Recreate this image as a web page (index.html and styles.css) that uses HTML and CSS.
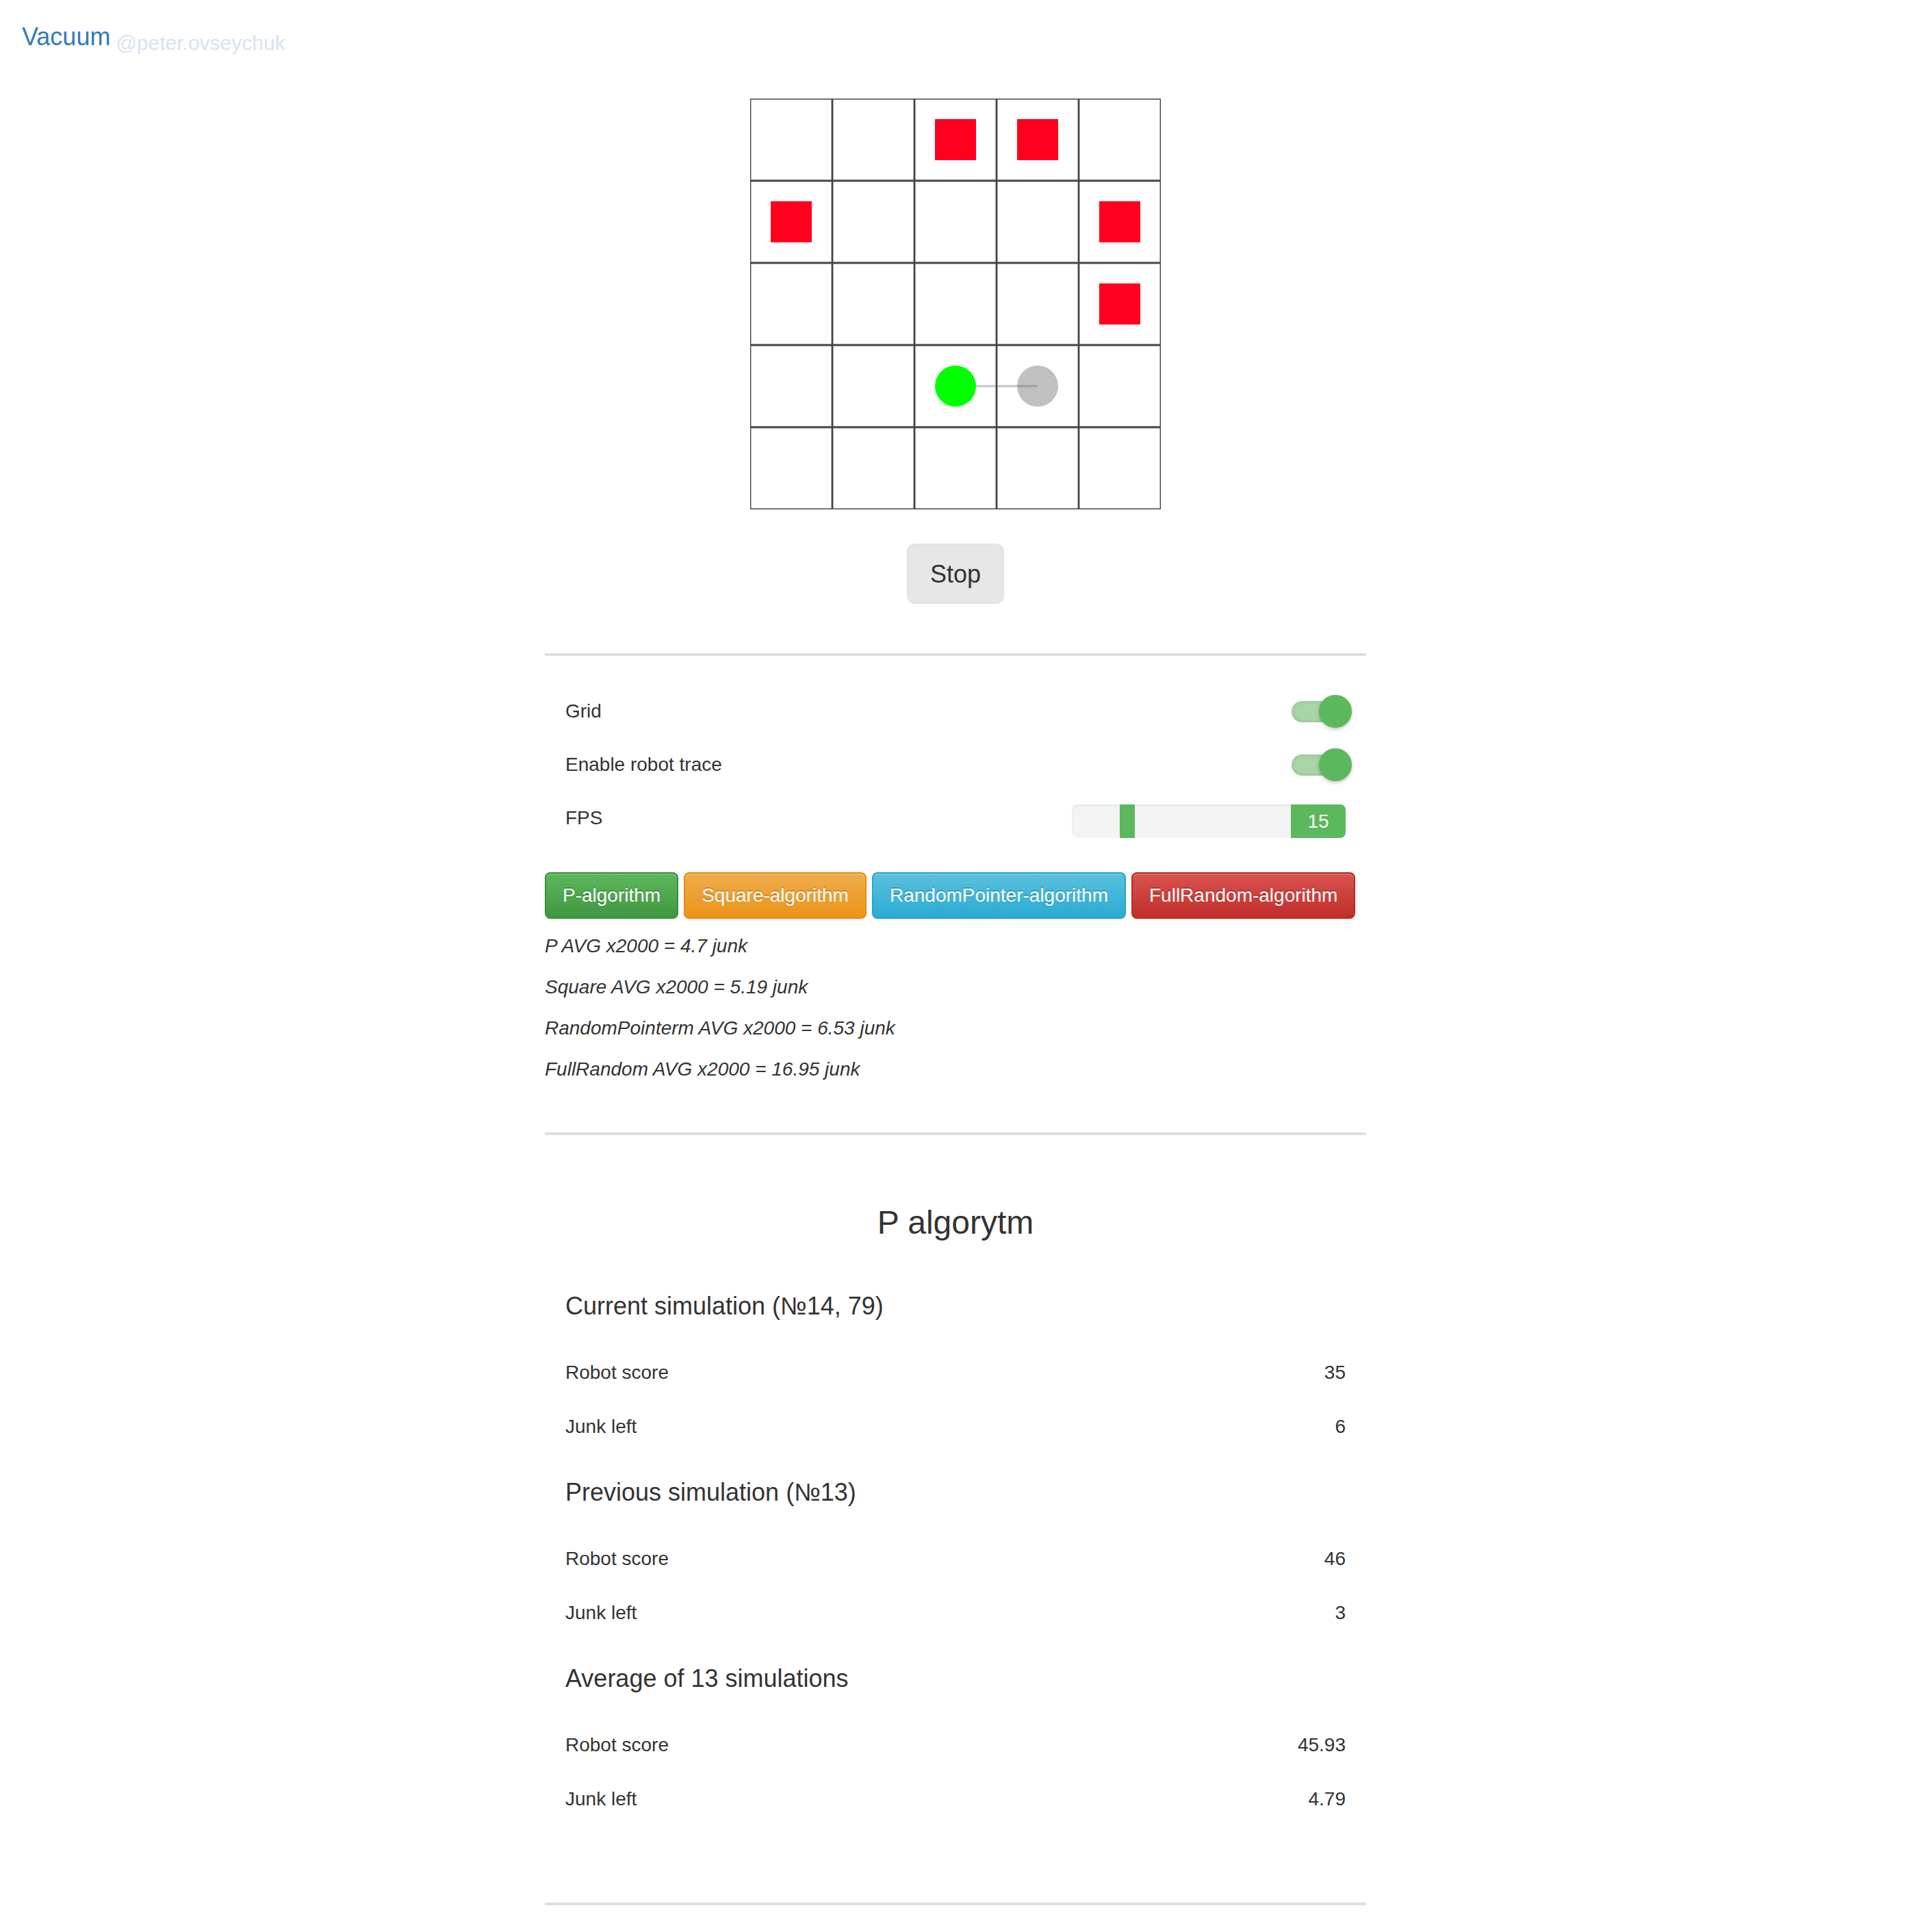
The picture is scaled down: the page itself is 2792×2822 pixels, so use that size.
FILE: index.html
```html
<!DOCTYPE html>
<html lang="en">
<head>
<meta charset="utf-8">
<title>Vacuum</title>
<link rel="stylesheet" href="styles.css">
</head>
<body>
<header class="navbar">
  <a class="brand" href="#">Vacuum</a><a class="author" href="#">@peter.ovseychuk</a>
</header>

<main class="main">
  <section class="board">
    <svg class="field" width="600" height="600" viewBox="0 0 600 600">
      <g fill="#ff001f">
        <rect x="270" y="30" width="60" height="60"/>
        <rect x="390" y="30" width="60" height="60"/>
        <rect x="30" y="150" width="60" height="60"/>
        <rect x="510" y="150" width="60" height="60"/>
        <rect x="510" y="270" width="60" height="60"/>
      </g>
      <circle cx="420" cy="420" r="30" fill="#c0c0c0"/>
      <line x1="300" y1="420" x2="420" y2="420" stroke="rgba(90,90,90,0.35)" stroke-width="3"/>
      <circle cx="300" cy="420" r="30" fill="#00ff00"/>
      <g stroke="#444444" stroke-width="2.8">
        <line x1="0" y1="0" x2="0" y2="600"/>
        <line x1="120" y1="0" x2="120" y2="600"/>
        <line x1="240" y1="0" x2="240" y2="600"/>
        <line x1="360" y1="0" x2="360" y2="600"/>
        <line x1="480" y1="0" x2="480" y2="600"/>
        <line x1="600" y1="0" x2="600" y2="600"/>
        <line x1="0" y1="0" x2="600" y2="0"/>
        <line x1="0" y1="120" x2="600" y2="120"/>
        <line x1="0" y1="240" x2="600" y2="240"/>
        <line x1="0" y1="360" x2="600" y2="360"/>
        <line x1="0" y1="480" x2="600" y2="480"/>
        <line x1="0" y1="600" x2="600" y2="600"/>
      </g>
    </svg>
    <button class="btn-stop" type="button">Stop</button>
  </section>

  <hr class="divider divider-first">

  <section class="settings">
    <div class="setting-row">
      <span class="setting-label">Grid</span>
      <span class="toggle"><span class="toggle-track"></span><span class="toggle-knob"></span></span>
    </div>
    <div class="setting-row">
      <span class="setting-label">Enable robot trace</span>
      <span class="toggle"><span class="toggle-track"></span><span class="toggle-knob"></span></span>
    </div>
    <div class="setting-row">
      <span class="setting-label">FPS</span>
      <span class="slider">
        <span class="slider-track"><span class="slider-handle"></span></span>
        <span class="slider-value">15</span>
      </span>
    </div>
  </section>

  <div class="algo-buttons">
    <button class="btn btn-success" type="button">P-algorithm</button>
    <button class="btn btn-warning" type="button">Square-algorithm</button>
    <button class="btn btn-info" type="button">RandomPointer-algorithm</button>
    <button class="btn btn-danger" type="button">FullRandom-algorithm</button>
  </div>

  <div class="averages">
    <p>P AVG x2000 = 4.7 junk</p>
    <p>Square AVG x2000 = 5.19 junk</p>
    <p>RandomPointerm AVG x2000 = 6.53 junk</p>
    <p>FullRandom AVG x2000 = 16.95 junk</p>
  </div>

  <hr class="divider divider-second">

  <section class="stats">
    <h3 class="stats-title">P algorytm</h3>

    <h4 class="stats-heading">Current simulation (№14, 79)</h4>
    <div class="stat-row"><span>Robot score</span><span>35</span></div>
    <div class="stat-row"><span>Junk left</span><span>6</span></div>

    <h4 class="stats-heading">Previous simulation (№13)</h4>
    <div class="stat-row"><span>Robot score</span><span>46</span></div>
    <div class="stat-row"><span>Junk left</span><span>3</span></div>

    <h4 class="stats-heading">Average of 13 simulations</h4>
    <div class="stat-row"><span>Robot score</span><span>45.93</span></div>
    <div class="stat-row"><span>Junk left</span><span>4.79</span></div>
  </section>

  <hr class="divider divider-last">
</main>
</body>
</html>
```

FILE: styles.css
```css
html, body {
  margin: 0;
  padding: 0;
  background: #ffffff;
}

body {
  font-family: "Liberation Sans", Arial, Helvetica, sans-serif;
  font-size: 28px;
  line-height: 40px;
  color: #333333;
}

.navbar {
  box-sizing: border-box;
  height: 100px;
  padding: 34px 0 0 32px;
  line-height: 40px;
}

.brand {
  font-size: 36px;
  color: #337ab7;
  text-decoration: none;
}

.author {
  font-size: 30px;
  margin-left: 8px;
  color: #d6e4f1;
  text-decoration: none;
  vertical-align: -7px;
}

.main {
  width: 1200px;
  margin: 0 auto;
}

.board {
  display: flex;
  flex-direction: column;
  align-items: center;
  padding-top: 44px;
}

.field {
  display: block;
  width: 600px;
  height: 600px;
}

.btn-stop {
  margin-top: 50px;
  font-family: inherit;
  font-size: 36px;
  line-height: 44px;
  padding: 21px 32px 19px;
  color: #333333;
  background: #e6e6e6;
  border: 2px solid #e2e2e2;
  border-radius: 12px;
  cursor: pointer;
}

.divider {
  border: 0;
  height: 4px;
  background: #dedede;
  margin: 0;
}

.divider-first {
  margin-top: 72px;
}

.divider-second {
  margin-top: 72px;
}

.divider-last {
  margin-top: 112px;
  margin-bottom: 40px;
}

.settings {
  margin-top: 42px;
}

.setting-row {
  display: flex;
  align-items: center;
  justify-content: space-between;
  height: 78px;
  padding: 0 30px;
}

.toggle {
  display: flex;
  align-items: center;
  margin-right: -9px;
}

.toggle-track {
  width: 70px;
  height: 31px;
  border-radius: 16px;
  background: #a8d4a8;
  box-shadow: inset 0 0 6px rgba(0, 0, 0, 0.12);
}

.toggle-knob {
  width: 48px;
  height: 48px;
  margin-left: -30px;
  border-radius: 50%;
  background: #5cb85c;
  box-shadow: 0 2px 5px rgba(0, 0, 0, 0.25);
}

.slider {
  display: flex;
  width: 400px;
  height: 49px;
  margin-top: 9px;
  border-radius: 8px;
  overflow: hidden;
  background: #f3f3f3;
  box-shadow: inset 0 2px 3px rgba(0, 0, 0, 0.06);
}

.slider-track {
  flex: 1;
  display: flex;
}

.slider-handle {
  width: 22px;
  margin-left: 70px;
  background: #5cb85c;
}

.slider-value {
  width: 80px;
  line-height: 49px;
  text-align: center;
  color: #ffffff;
  background: #5cb85c;
}

.algo-buttons {
  display: flex;
  gap: 8px;
  margin-top: 40px;
}

.btn {
  font-family: inherit;
  font-size: 28px;
  line-height: 40px;
  padding: 12px 24px;
  border-radius: 8px;
  border: 2px solid transparent;
  color: #ffffff;
  text-shadow: 0 -2px 0 rgba(0, 0, 0, 0.2);
  box-shadow: inset 0 2px 0 rgba(255, 255, 255, 0.15), 0 2px 2px rgba(0, 0, 0, 0.075);
  cursor: pointer;
}

.btn-success {
  background: linear-gradient(to bottom, #5cb85c 0%, #419641 100%);
  border-color: #3e8f3e;
}

.btn-warning {
  background: linear-gradient(to bottom, #f0ad4e 0%, #eb9316 100%);
  border-color: #e38d13;
}

.btn-info {
  background: linear-gradient(to bottom, #5bc0de 0%, #2aabd2 100%);
  border-color: #28a4c9;
}

.btn-danger {
  background: linear-gradient(to bottom, #d9534f 0%, #c12e2a 100%);
  border-color: #b92c28;
}

.averages p {
  margin: 20px 0 0;
  font-style: italic;
  line-height: 40px;
}

.stats {
  display: flex;
  flex-direction: column;
}

.stats-title {
  margin: 101px 0 37px;
  font-size: 48px;
  font-weight: 500;
  line-height: 53px;
  text-align: center;
}

.stats-heading {
  margin: 37px 0 37px;
  padding: 0 30px;
  font-size: 36px;
  font-weight: 500;
  line-height: 40px;
}

.stats-title + .stats-heading {
  margin-top: 39px;
}

.stat-row {
  display: flex;
  align-items: center;
  justify-content: space-between;
  height: 79px;
  padding: 0 30px;
}
```
